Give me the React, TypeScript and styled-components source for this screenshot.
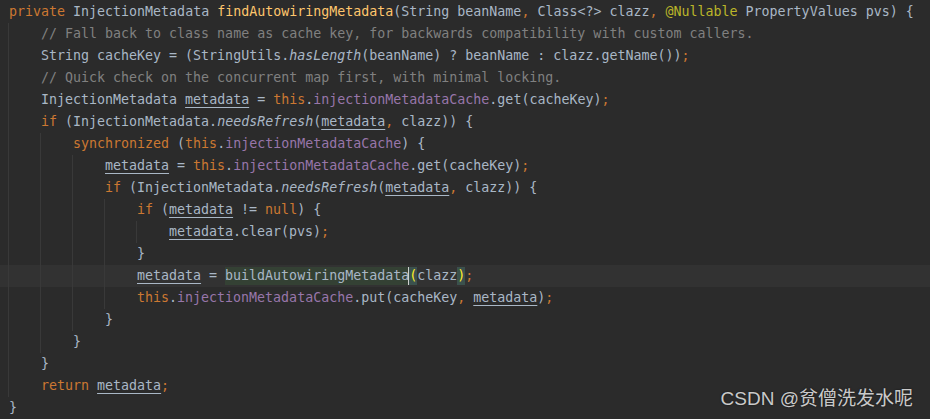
import React from 'react';
import styled, { createGlobalStyle, css } from 'styled-components';

const GlobalStyle = createGlobalStyle`
  html, body {
    margin: 0;
    padding: 0;
    background: #2b2b2b;
    overflow: hidden;
  }
`;

const Editor = styled.div`
  position: relative;
  width: 930px;
  height: 419px;
  background: #2b2b2b;
  padding-top: 1px;
  box-sizing: border-box;
  font-family: 'DejaVu Sans Mono', 'Liberation Mono', monospace;
  font-size: 13.3px;
  color: #a9b7c6;
  overflow: hidden;
`;

const Line = styled.div<{ $current?: boolean }>`
  display: flex;
  align-items: center;
  height: 22px;
  padding-left: 9px;
  white-space: pre;
  background: ${(p) => (p.$current ? '#323232' : 'transparent')};
`;

const Indent = styled.span<{ $guide: boolean }>`
  display: inline-block;
  width: 32px;
  height: 22px;
  flex-shrink: 0;
  ${(p) =>
    p.$guide &&
    css`
      background: linear-gradient(#393939, #393939) no-repeat 0 0 / 1px 100%;
      margin-left: -1px;
      padding-left: 1px;
    `}
`;

type Kind = 'kw' | 'fn' | 'ann' | 'field' | 'cm' | 'it' | 'ul' | 'hl' | 'br' | 'caret';

const kindStyles: Record<string, ReturnType<typeof css>> = {
  kw: css`color: #cc7832;`,
  fn: css`color: #ffc66d;`,
  ann: css`color: #bbb529;`,
  field: css`color: #9876aa;`,
  cm: css`color: #808080;`,
  it: css`font-style: italic;`,
  ul: css`
    text-decoration: underline;
    text-underline-offset: 3px;
    text-decoration-thickness: 1px;
  `,
  hl: css`background: #344134;`,
  br: css`
    background: #3b514d;
    color: #ffef28;
  `,
};

const Token = styled.span<{ $kind?: Kind }>`
  display: inline-block;
  line-height: 18px;
  ${(p) => (p.$kind ? kindStyles[p.$kind] : '')}
`;

const Caret = styled.span`
  position: relative;
  display: inline-block;
  width: 0;
  height: 18px;

  &::after {
    content: '';
    position: absolute;
    left: -1px;
    top: 0;
    width: 1px;
    height: 18px;
    background: #cfcfcf;
  }
`;

const Watermark = styled.div`
  position: absolute;
  right: 17px;
  bottom: 9px;
  font-family: 'Liberation Sans', 'Noto Sans CJK SC', sans-serif;
  font-size: 19px;
  color: rgba(235, 235, 235, 0.85);
  text-shadow: 0 0 2px rgba(0, 0, 0, 0.6);
  white-space: nowrap;
`;

type Seg = [string, Kind?];

interface CodeLine {
  indent: number;
  guides: number[];
  segs: Seg[];
  current?: boolean;
}

const needsRefresh: Seg[] = [
  ['if', 'kw'],
  [' (InjectionMetadata.'],
  ['needsRefresh', 'it'],
  ['('],
  ['metadata', 'ul'],
  [',', 'kw'],
  [' clazz)) {'],
];

const lines: CodeLine[] = [
  {
    indent: 0,
    guides: [],
    segs: [
      ['private', 'kw'],
      [' InjectionMetadata '],
      ['findAutowiringMetadata', 'fn'],
      ['(String beanName'],
      [',', 'kw'],
      [' Class<?> clazz'],
      [',', 'kw'],
      [' '],
      ['@Nullable', 'ann'],
      [' PropertyValues pvs) {'],
    ],
  },
  {
    indent: 1,
    guides: [0],
    segs: [['// Fall back to class name as cache key, for backwards compatibility with custom callers.', 'cm']],
  },
  {
    indent: 1,
    guides: [0],
    segs: [
      ['String cacheKey = (StringUtils.'],
      ['hasLength', 'it'],
      ['(beanName) ? beanName : clazz.getName())'],
      [';', 'kw'],
    ],
  },
  {
    indent: 1,
    guides: [0],
    segs: [['// Quick check on the concurrent map first, with minimal locking.', 'cm']],
  },
  {
    indent: 1,
    guides: [0],
    segs: [
      ['InjectionMetadata '],
      ['metadata', 'ul'],
      [' = '],
      ['this', 'kw'],
      ['.'],
      ['injectionMetadataCache', 'field'],
      ['.get(cacheKey)'],
      [';', 'kw'],
    ],
  },
  { indent: 1, guides: [0], segs: needsRefresh },
  {
    indent: 2,
    guides: [0, 1],
    segs: [
      ['synchronized', 'kw'],
      [' ('],
      ['this', 'kw'],
      ['.'],
      ['injectionMetadataCache', 'field'],
      [') {'],
    ],
  },
  {
    indent: 3,
    guides: [0, 1, 2],
    segs: [
      ['metadata', 'ul'],
      [' = '],
      ['this', 'kw'],
      ['.'],
      ['injectionMetadataCache', 'field'],
      ['.get(cacheKey)'],
      [';', 'kw'],
    ],
  },
  { indent: 3, guides: [0, 1, 2], segs: needsRefresh },
  {
    indent: 4,
    guides: [0, 1, 2, 3],
    segs: [
      ['if', 'kw'],
      [' ('],
      ['metadata', 'ul'],
      [' != '],
      ['null', 'kw'],
      [') {'],
    ],
  },
  {
    indent: 5,
    guides: [0, 1, 2, 3, 4],
    segs: [['metadata', 'ul'], ['.clear(pvs)'], [';', 'kw']],
  },
  { indent: 4, guides: [0, 1, 2, 3], segs: [['}']] },
  {
    indent: 4,
    guides: [0, 1, 2, 3],
    current: true,
    segs: [
      ['metadata', 'ul'],
      [' = '],
      ['buildAutowiringMetadata', 'hl'],
      ['', 'caret'],
      ['(', 'br'],
      ['clazz'],
      [')', 'br'],
      [';', 'kw'],
    ],
  },
  {
    indent: 4,
    guides: [0, 1, 2, 3],
    segs: [
      ['this', 'kw'],
      ['.'],
      ['injectionMetadataCache', 'field'],
      ['.put(cacheKey'],
      [',', 'kw'],
      [' '],
      ['metadata', 'ul'],
      [')'],
      [';', 'kw'],
    ],
  },
  { indent: 3, guides: [0, 1, 2], segs: [['}']] },
  { indent: 2, guides: [0, 1], segs: [['}']] },
  { indent: 1, guides: [0], segs: [['}']] },
  {
    indent: 1,
    guides: [0],
    segs: [['return', 'kw'], [' '], ['metadata', 'ul'], [';', 'kw']],
  },
  { indent: 0, guides: [], segs: [['}']] },
];

export default function App() {
  return (
    <>
      <GlobalStyle />
      <Editor>
        {lines.map((line, i) => (
          <Line key={i} $current={line.current}>
            {Array.from({ length: line.indent }).map((_, k) => (
              <Indent key={k} $guide={line.guides.includes(k)} />
            ))}
            {line.segs.map(([text, kind], j) =>
              kind === 'caret' ? (
                <Caret key={j} />
              ) : (
                <Token key={j} $kind={kind}>
                  {text}
                </Token>
              )
            )}
          </Line>
        ))}
        <Watermark>CSDN @贫僧洗发水呢</Watermark>
      </Editor>
    </>
  );
}
